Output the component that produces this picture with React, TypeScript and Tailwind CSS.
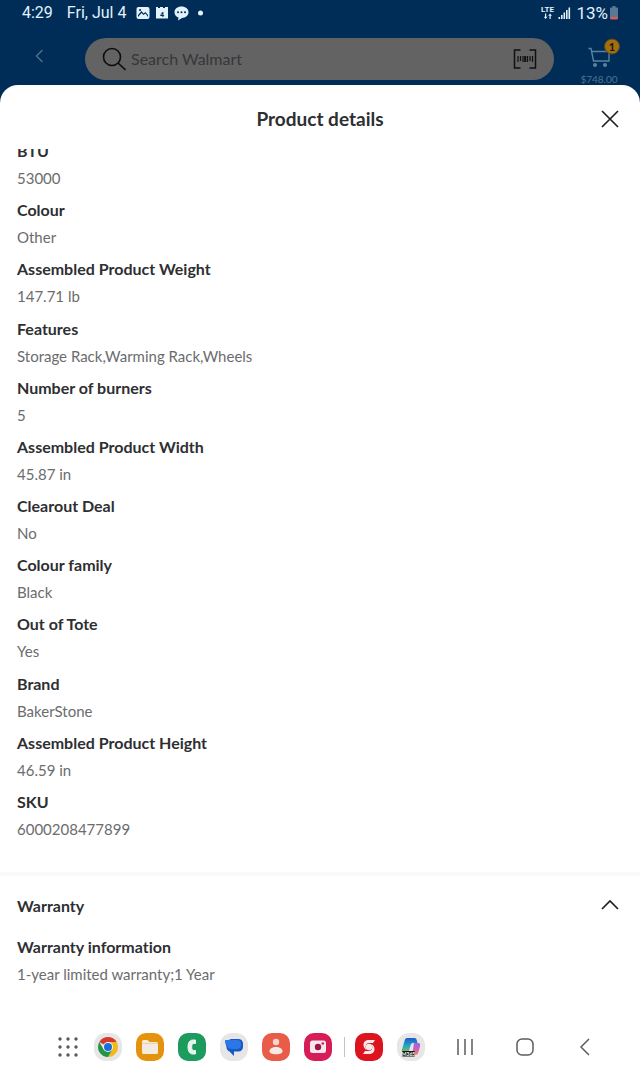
import { useState } from "react";

const specs = [
  { label: "BTU", value: "53000" },
  { label: "Colour", value: "Other" },
  { label: "Assembled Product Weight", value: "147.71 lb" },
  { label: "Features", value: "Storage Rack,Warming Rack,Wheels" },
  { label: "Number of burners", value: "5" },
  { label: "Assembled Product Width", value: "45.87 in" },
  { label: "Clearout Deal", value: "No" },
  { label: "Colour family", value: "Black" },
  { label: "Out of Tote", value: "Yes" },
  { label: "Brand", value: "BakerStone" },
  { label: "Assembled Product Height", value: "46.59 in" },
  { label: "SKU", value: "6000208477899" },
];

function Spec({ label, value }: { label: string; value: string }) {
  return (
    <div>
      <dt className="text-[16px] leading-6 font-bold text-[#2e2f32]">{label}</dt>
      <dd className="mt-[3px] text-[15px] leading-6 text-[#6b6c6e]">{value}</dd>
    </div>
  );
}

function StatusBar() {
  return (
    <div className="flex h-[26px] items-center pr-[22px] pl-[22px] font-[Roboto,sans-serif] text-[16px] leading-5 text-[#e3f1fb]">
      <span>4:29</span>
      <span className="ml-[14px]">Fri, Jul 4</span>
      <svg className="ml-[10px] h-4 w-[68px]" viewBox="0 0 68 16" fill="currentColor" aria-hidden="true">
        <path
          fillRule="evenodd"
          d="M2.500 2h9a2 2 0 0 1 2 2v8a2 2 0 0 1-2 2h-9a2 2 0 0 1-2-2V4a2 2 0 0 1 2-2ZM2 12l3.500-4 2 2 2-1.500L12 12V10L9.500 7 7.500 8.500 5.500 6 2 10ZM4 4a1 1 0 1 0 .1 0Z"
        />
        <path d="M20 3.500V2h2v1h2V2h3v1h2V2h3v11.500H20Z" />
        <text x="26" y="11.500" textAnchor="middle" fontSize="7" fontWeight="700" fill="#002c56">
          4
        </text>
        <path d="M45.500 1.500c4 0 7 2.300 7 5.700s-3 5.600-6.500 5.700L42 15.500l.5-3c-2.500-1-4-2.800-4-5.300 0-3.400 3-5.700 7-5.700Z" />
        <g fill="#002c56">
          <circle cx="42" cy="7.200" r="1" />
          <circle cx="45.500" cy="7.200" r="1" />
          <circle cx="49" cy="7.200" r="1" />
        </g>
        <circle cx="64.500" cy="8" r="2.500" />
      </svg>
      <svg className="ml-auto h-4 w-[30px]" viewBox="0 0 30 16" fill="currentColor" aria-hidden="true">
        <text x="0" y="7" fontSize="8" fontWeight="700">
          LTE
        </text>
        <path d="M4 8.500h1.200v3.200h1.300l-1.900 2.300-1.900-2.300H4ZM8.500 14h1.200v-3.200H11L9.100 8.500 7.200 10.800h1.300Z" />
        <path d="M17.500 12h1.600v2h-1.600ZM20 10h1.600v4h-1.600ZM22.500 7.500h1.600V14h-1.600ZM25 5h1.600v9h-1.600ZM27.500 2.500h1.600V14h-1.600Z" />
      </svg>
      <span className="ml-[5px] text-[17px]">13%</span>
      <svg className="ml-0.5 h-[14px] w-2" viewBox="0 0 8 14" aria-hidden="true">
        <path d="M2.500 0h3v1.500H7a1 1 0 0 1 1 1V11H0V2.500a1 1 0 0 1 1-1h1.500Z" fill="#587a94" />
        <path d="M0 11h8v1a1.500 1.500 0 0 1-1.500 1.500h-5A1.500 1.500 0 0 1 0 12Z" fill="#dd5b56" />
      </svg>
    </div>
  );
}

function SearchHeader() {
  return (
    <div className="flex h-[59px] items-start pt-3 pr-5 pl-[33px]">
      <button type="button" aria-label="Back" className="mt-2.5 mr-10 text-[#4d7593]">
        <svg className="h-4 w-3" viewBox="0 0 12 16" fill="none" stroke="currentColor" strokeWidth="1.300">
          <path d="M9.500 2 3.500 8l6 6" />
        </svg>
      </button>
      <div className="flex h-[42px] flex-1 items-center rounded-full bg-[#636363] pr-[17px] pl-[17px]">
        <svg className="h-6 w-6" viewBox="0 0 24 24" fill="none" stroke="#0c0d0f" strokeWidth="1.600" aria-hidden="true">
          <circle cx="10" cy="10" r="8.500" />
          <path d="m16 16 7.500 7" />
        </svg>
        <input
          type="search"
          aria-label="Search Walmart"
          placeholder="Search Walmart"
          className="ml-[5px] min-w-0 flex-1 bg-transparent text-[16px] leading-6 outline-none placeholder:text-[#35373a]"
        />
        <button type="button" aria-label="Scan barcode">
          <svg className="h-5 w-6" viewBox="0 0 24 20" fill="none" stroke="#101113" strokeWidth="1.500">
            <path d="M7.500 1H1.500v18h6M16.500 1h6v18h-6" />
            <path d="M5 7v6M7.500 7v5M10 7v6M14.500 7v6M17 7v5M19.500 7v6" strokeWidth="1.200" />
            <path d="M12.200 7v6" strokeWidth="2" />
          </svg>
        </button>
      </div>
      <button type="button" aria-label="Cart, 1 item, $748.00" className="ml-6 flex w-[42px] flex-col items-center">
        <svg className="h-[35px] w-[42px]" viewBox="0 0 42 35" fill="none">
          <path d="M10.500 10.500h2.500l2.500 12.500h15.500V13.500H13.500" stroke="#58839c" strokeWidth="1.400" />
          <circle cx="17" cy="27" r="2" fill="#58839c" />
          <circle cx="27" cy="27" r="2" fill="#58839c" />
          <circle cx="34" cy="8.500" r="7.500" fill="#a1700d" stroke="#57451f" />
          <text x="34" y="12.500" textAnchor="middle" fontSize="11" fontWeight="700" fill="#141414">
            1
          </text>
        </svg>
        <span className="text-[10px] leading-3 text-[#4a748f]">$748.00</span>
      </button>
    </div>
  );
}

function Dock() {
  return (
    <nav aria-label="Taskbar" className="flex h-[50px] shrink-0 items-center pr-[45px] pl-[58px]">
      <button type="button" aria-label="All apps">
        <svg className="h-5 w-5" viewBox="0 0 20 20" fill="#57585b">
          {[2, 10, 18].map((y) => [2, 10, 18].map((x) => <circle key={`${x}-${y}`} cx={x} cy={y} r="1.700" />))}
        </svg>
      </button>
      <div className="ml-4 flex items-center gap-[14px]">
        <button type="button" aria-label="Chrome">
          <svg className="h-7 w-7" viewBox="0 0 28 28">
            <rect width="28" height="28" rx="12" fill="#e6e6e6" />
            <path d="M14 14 5.340 9A10 10 0 0 1 22.660 9Z" fill="#d43a2c" />
            <path d="M22.660 9A10 10 0 0 1 14 24l4.330-7.500L14 9Z" fill="#f1b91a" />
            <path d="M5.340 9A10 10 0 0 0 14 24l4.330-7.500-8.660 0Z" fill="#249447" />
            <circle cx="14" cy="14" r="5" fill="#f2f2f2" />
            <circle cx="14" cy="14" r="4" fill="#1b6ddc" />
          </svg>
        </button>
        <button type="button" aria-label="My Files">
          <svg className="h-7 w-7" viewBox="0 0 28 28">
            <rect width="28" height="28" rx="10" fill="#e5930e" />
            <path d="M6 8.500A1.500 1.500 0 0 1 7.500 7h4l2 2h7A1.500 1.500 0 0 1 22 10.500v9a1.500 1.500 0 0 1-1.500 1.500h-13A1.500 1.500 0 0 1 6 19.500Z" fill="#f3ebdf" />
            <path d="M6 10.500h16" stroke="#ecd2a5" />
          </svg>
        </button>
        <button type="button" aria-label="Phone">
          <svg className="h-7 w-7" viewBox="0 0 28 28">
            <rect width="28" height="28" rx="10" fill="#1b9b5c" />
            <path
              d="M17.500 7h-2.800C11.500 7 10 10 10 14s1.500 7 4.700 7h2.800v-3.500h-2.300c-1-.5-1.500-1.500-1.500-3.500s.5-3 1.500-3.500h2.300Z"
              fill="#e9f3ed"
              stroke="#e9f3ed"
              strokeLinejoin="round"
            />
          </svg>
        </button>
        <button type="button" aria-label="Messages">
          <svg className="h-7 w-7" viewBox="0 0 28 28">
            <rect width="28" height="28" rx="12" fill="#e6e6e6" />
            <path d="M11 6h7.500a4.500 4.500 0 0 1 4.500 4.500v3.500a4.500 4.500 0 0 1-4.500 4.500h-4.500v4.500l-4.500-4.500C7.500 18 6.500 16 6.500 14L5 8.500Z" fill="#1758c7" />
            <path d="M5 7h12a4 4 0 0 1 4 4v1a4 4 0 0 1-4 4h-5C8 16 6 13 5 7Z" fill="#2b77e5" />
          </svg>
        </button>
        <button type="button" aria-label="Contacts">
          <svg className="h-7 w-7" viewBox="0 0 28 28">
            <rect width="28" height="28" rx="10" fill="#e85c48" />
            <circle cx="14" cy="9" r="3.200" fill="#f7d5ce" />
            <path d="M14 14c3.700 0 6.500 1.800 6.500 4.300 0 2-2.500 3-6.500 3s-6.500-1-6.500-3C7.500 15.800 10.300 14 14 14Z" fill="#f6e9e5" />
          </svg>
        </button>
        <button type="button" aria-label="Camera">
          <svg className="h-7 w-7" viewBox="0 0 28 28">
            <rect width="28" height="28" rx="10" fill="#d71d57" />
            <rect x="6" y="7.500" width="16" height="12.500" rx="2.500" fill="#f7e8ed" />
            <circle cx="14" cy="14" r="3.200" fill="#9d1746" />
            <circle cx="18.800" cy="10.500" r="1.300" fill="#d71d57" />
          </svg>
        </button>
      </div>
      <span className="ml-3 h-5 w-px bg-[#c4c4c4]" />
      <div className="ml-[10px] flex items-center gap-[14px]">
        <button type="button" aria-label="Scotiabank">
          <svg className="h-7 w-7" viewBox="0 0 28 28">
            <rect width="28" height="28" rx="10" fill="#dc1420" />
            <circle cx="14" cy="14" r="3.200" fill="#f8e9e9" />
            <path d="M20 7h-6.500C10 7 8.500 9.500 8.500 12s1.500 4 3 5c-1.500-3.500-1-7 3-7h3.500Z" fill="#f8e9e9" />
            <path d="M8 21h6.500c3.500 0 5-2.500 5-5s-1.500-4-3-5c1.500 3.500 1 7-3 7H10Z" fill="#f8e9e9" />
          </svg>
        </button>
        <button type="button" aria-label="Microsoft 365 Copilot">
          <svg className="h-7 w-7" viewBox="0 0 28 28">
            <defs>
              <linearGradient id="cool" x1="0" y1="0" x2="0" y2="1">
                <stop offset="0" stopColor="#2357c9" />
                <stop offset=".5" stopColor="#20a5c7" />
                <stop offset="1" stopColor="#8fbe45" />
              </linearGradient>
              <linearGradient id="warm" x1="0" y1="0" x2="0" y2="1">
                <stop offset="0" stopColor="#9b65df" />
                <stop offset=".6" stopColor="#d85fb4" />
                <stop offset="1" stopColor="#ee8a65" />
              </linearGradient>
            </defs>
            <rect width="28" height="28" rx="12" fill="#e6e6e6" />
            <path d="M10 5h7.500c1.500 0 2 1 2.500 3l.5 2H16c-1.500 0-2 1-2.500 2.500L12 18c-.5 1.500-1 2-2.500 2H7c-2 0-2.500-1.500-2-3.500L7.500 8C8 6 8.500 5 10 5Z" fill="url(#cool)" />
            <path d="M17 10h4c2 0 2.500 1.500 2 3.500l-1.500 5.500c-.5 2-1.500 3-3 3H13c1.500 0 2-1 2.500-2.500Z" fill="url(#warm)" />
            <rect x="5" y="18" width="13" height="5.500" rx="1" fill="#151515" />
            <text x="11.500" y="22.600" textAnchor="middle" fontSize="5" fontWeight="700" fill="#fff">
              M365
            </text>
          </svg>
        </button>
      </div>
      <div className="ml-auto flex items-center gap-10 text-[#5b5c5e]">
        <button type="button" aria-label="Recent apps">
          <svg className="h-5 w-5" viewBox="0 0 20 20" stroke="currentColor" strokeWidth="1.500">
            <path d="M3 2v16M10 2v16M17 2v16" />
          </svg>
        </button>
        <button type="button" aria-label="Home">
          <svg className="h-5 w-5" viewBox="0 0 20 20" fill="none" stroke="currentColor" strokeWidth="1.500">
            <rect x="2" y="2" width="16" height="16" rx="5" />
          </svg>
        </button>
        <button type="button" aria-label="Back">
          <svg className="h-5 w-5" viewBox="0 0 20 20" fill="none" stroke="currentColor" strokeWidth="1.500">
            <path d="m14 2-8 8 8 8" />
          </svg>
        </button>
      </div>
    </nav>
  );
}

export default function App() {
  const [open, setOpen] = useState(true);

  return (
    <div className="flex h-screen flex-col bg-[#002d58] font-[Lato,sans-serif] [font-variant-ligatures:none]">
      <StatusBar />
      <SearchHeader />
      <main className="flex min-h-0 flex-1 flex-col rounded-t-[18px] bg-white">
        <header className="grid h-16 shrink-0 grid-cols-[1fr_auto_1fr] items-center px-5 pt-1">
          <h1 className="col-start-2 text-[19px] leading-6 font-bold text-[#2e2f32]">Product details</h1>
          <button type="button" aria-label="Close" className="justify-self-end">
            <svg className="h-5 w-5" viewBox="0 0 20 20" fill="none" stroke="#1f2023" strokeWidth="1.700">
              <path d="m2 2 16 16M18 2 2 18" />
            </svg>
          </button>
        </header>

        <div className="flex min-h-0 flex-1 flex-col overflow-y-auto">
          {/* scrolled a little, so the first label is cut by the header */}
          <dl className="-mt-2.5 flex flex-1 flex-col justify-between px-[17px]">
            {specs.map((spec) => (
              <Spec key={spec.label} {...spec} />
            ))}
          </dl>

          <section className="mt-[31px] border-t-4 border-[#fafafa] pb-9">
            <h2>
              <button
                type="button"
                aria-expanded={open}
                onClick={() => setOpen(!open)}
                className="flex h-[59px] w-full items-center justify-between pr-5 pl-[17px] text-[16px] leading-6 font-bold text-[#2e2f32]"
              >
                Warranty
                <svg
                  className={open ? "h-5 w-5" : "h-5 w-5 rotate-180"}
                  viewBox="0 0 20 20"
                  fill="none"
                  stroke="#1f2023"
                  strokeWidth="1.700"
                >
                  <path d="m2 13 8-8 8 8" />
                </svg>
              </button>
            </h2>
            {open && (
              <dl className="px-[17px]">
                <Spec label="Warranty information" value="1-year limited warranty;1 Year" />
              </dl>
            )}
          </section>
        </div>

        <Dock />
      </main>
    </div>
  );
}
